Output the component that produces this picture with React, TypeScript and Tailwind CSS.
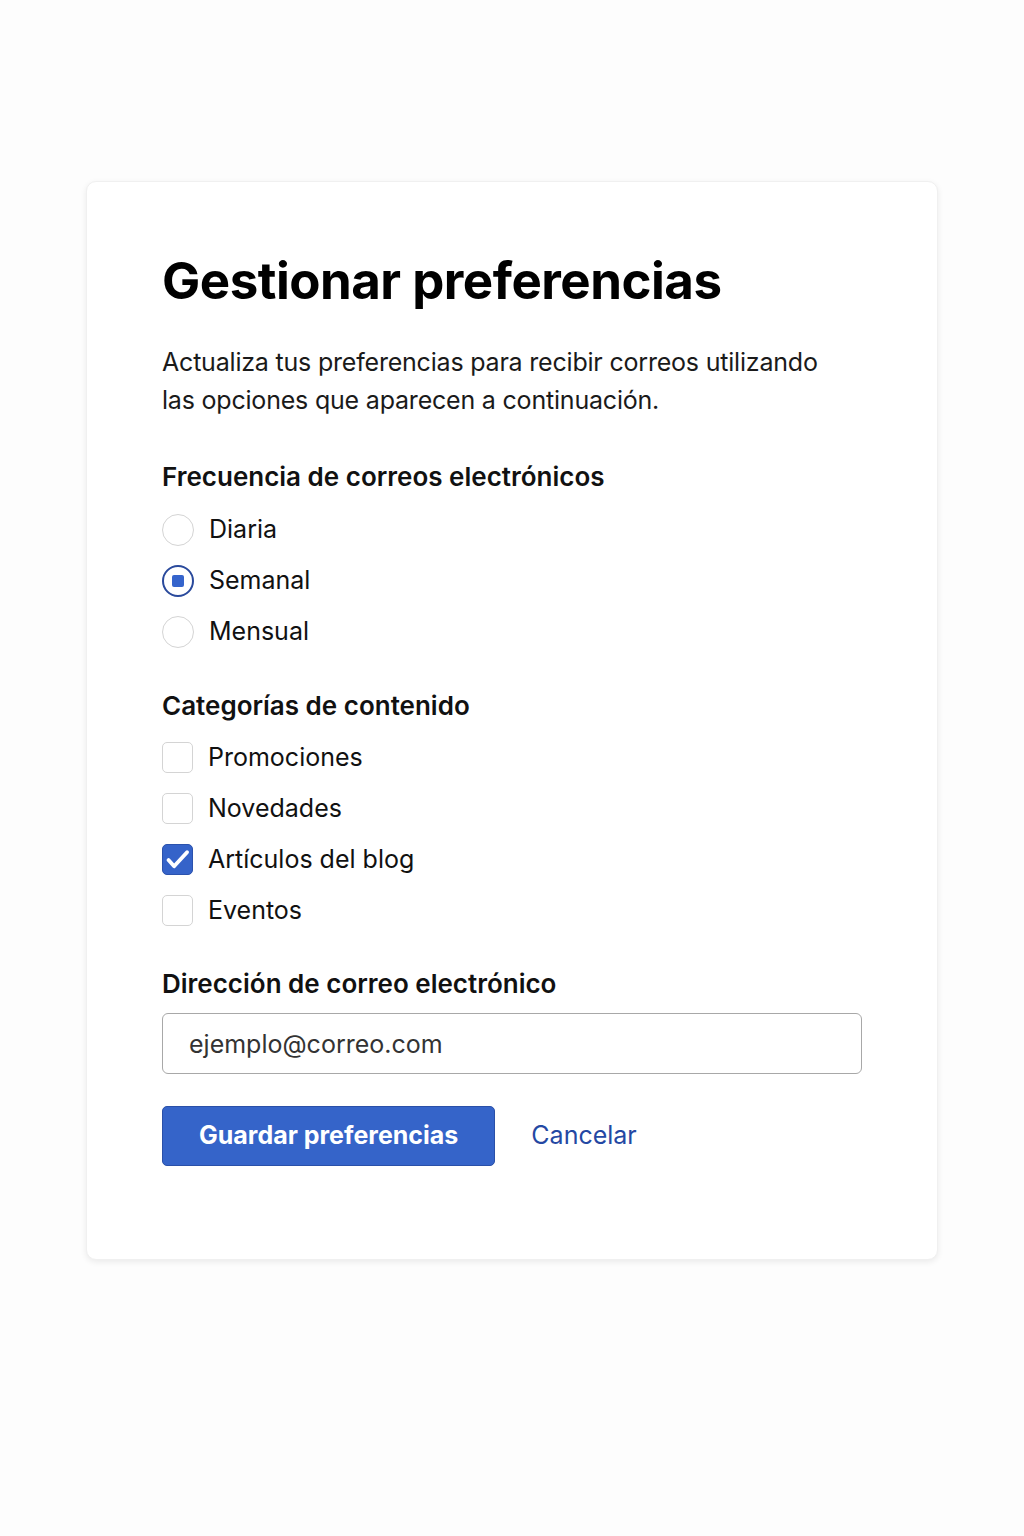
import React, { useState } from 'react';

const font = { fontFamily: 'Inter, "Noto Sans", sans-serif' };

function Radio({ label, checked, onSelect }: { label: string; checked: boolean; onSelect: () => void }) {
  return (
    <label className="flex items-center gap-[15px] h-[51px] cursor-pointer" onClick={onSelect}>
      <span
        className={
          checked
            ? 'w-[32px] h-[32px] rounded-full border-2 border-[#2a4a9c] bg-white flex items-center justify-center'
            : 'w-[32px] h-[32px] rounded-full border-[1.5px] border-[#d4d4d4] bg-white'
        }
      >
        {checked && <span className="w-[12px] h-[12px] bg-[#3564cc] rounded-[2px]" />}
      </span>
      <span className="text-[25px] text-[#111]">{label}</span>
    </label>
  );
}

function Checkbox({ label, checked, onToggle }: { label: string; checked: boolean; onToggle: () => void }) {
  return (
    <label className="flex items-center gap-[15px] h-[51px] cursor-pointer" onClick={onToggle}>
      <span
        className={
          checked
            ? 'w-[31px] h-[31px] rounded-[5px] bg-[#3563c9] border border-[#2b52ad] flex items-center justify-center'
            : 'w-[31px] h-[31px] rounded-[5px] border-[1.5px] border-[#d4d4d4] bg-white'
        }
      >
        {checked && (
          <svg viewBox="0 0 24 24" className="w-[27px] h-[27px]" fill="none" stroke="white" strokeWidth="3.4" strokeLinecap="round" strokeLinejoin="round">
            <path d="M4 12.5l5 5.5L20.5 5.5" />
          </svg>
        )}
      </span>
      <span className="text-[25px] text-[#111]">{label}</span>
    </label>
  );
}

export default function App() {
  const [freq, setFreq] = useState('Semanal');
  const [cats, setCats] = useState<string[]>(['Artículos del blog']);

  const toggle = (c: string) =>
    setCats(prev => (prev.includes(c) ? prev.filter(x => x !== c) : [...prev, c]));

  return (
    <div className="min-h-[1536px] bg-[#fdfdfd] pt-[181px] px-[86px]" style={font}>
      <div className="bg-white rounded-[10px] border border-[#f0f0f0] shadow-[0_2px_6px_rgba(0,0,0,0.08)] px-[75px] pt-[68px] pb-[93px]">
        <h1 className="text-[51px] font-bold text-black leading-[1.2] tracking-[-0.5px]">Gestionar preferencias</h1>
        <p className="mt-[32px] max-w-[680px] text-[25px] leading-[38px] text-[#1a1a1a] tracking-[-0.2px]">
          Actualiza tus preferencias para recibir correos utilizando las opciones que aparecen a continuación.
        </p>

        <h2 className="mt-[42px] text-[26px] font-semibold text-[#111] leading-[32px]">Frecuencia de correos electrónicos</h2>
        <div className="mt-[11px] flex flex-col">
          {['Diaria', 'Semanal', 'Mensual'].map(o => (
            <Radio key={o} label={o} checked={freq === o} onSelect={() => setFreq(o)} />
          ))}
        </div>

        <h2 className="mt-[33px] text-[26px] font-semibold text-[#111] leading-[32px]">Categorías de contenido</h2>
        <div className="mt-[10px] flex flex-col">
          {['Promociones', 'Novedades', 'Artículos del blog', 'Eventos'].map(o => (
            <Checkbox key={o} label={o} checked={cats.includes(o)} onToggle={() => toggle(o)} />
          ))}
        </div>

        <h2 className="mt-[32px] text-[26px] font-semibold text-[#111] leading-[32px]">Dirección de correo electrónico</h2>
        <input
          type="email"
          defaultValue="ejemplo@correo.com"
          className="mt-[13px] w-full h-[61px] rounded-[6px] border border-[#a8a8a8] px-[26px] text-[25px] text-[#333] outline-none"
        />

        <div className="mt-[32px] flex items-center gap-[36px]">
          <button className="h-[60px] px-[36px] rounded-[5px] bg-[#3564c9] border border-[#2a50a8] text-white text-[25px] font-bold">
            Guardar preferencias
          </button>
          <button className="text-[25px] text-[#2448a3]">Cancelar</button>
        </div>
      </div>
    </div>
  );
}
